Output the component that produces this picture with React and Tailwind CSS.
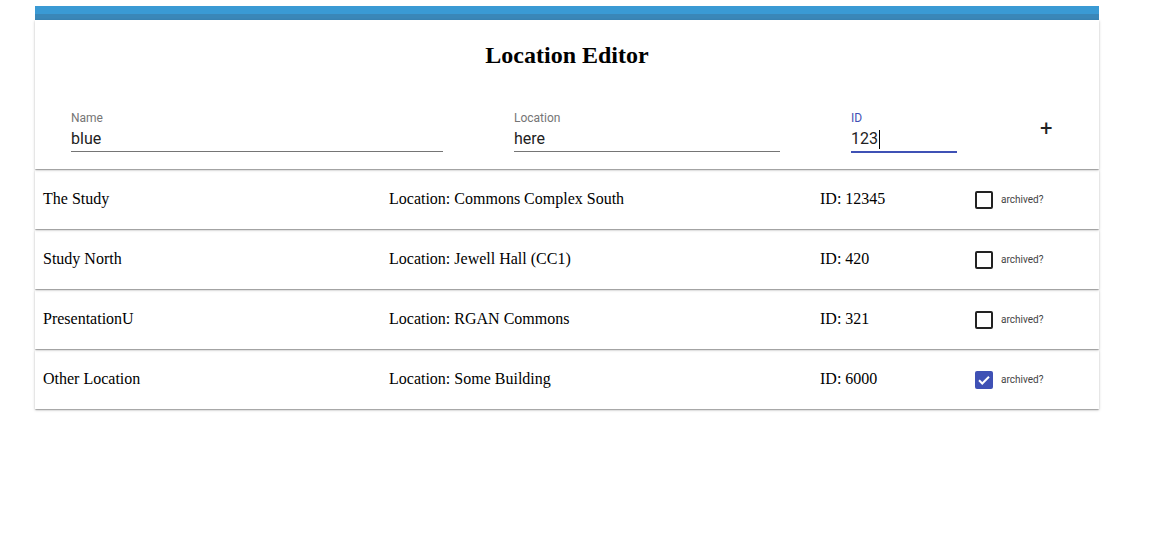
import React from "react";

const rows = [
  { name: "The Study", loc: "Commons Complex South", id: "12345", archived: false },
  { name: "Study North", loc: "Jewell Hall (CC1)", id: "420", archived: false },
  { name: "PresentationU", loc: "RGAN Commons", id: "321", archived: false },
  { name: "Other Location", loc: "Some Building", id: "6000", archived: true },
];

const shadow = "shadow-[0_1px_3px_rgba(0,0,0,0.2),0_1px_1px_rgba(0,0,0,0.14),0_2px_1px_-1px_rgba(0,0,0,0.12)]";

function Field({ label, value, width, active }) {
  return (
    <div className={`flex flex-col ${width}`} style={{ fontFamily: "Roboto, sans-serif" }}>
      <span className={`text-[12px] leading-[14px] ${active ? "text-[#3f51b5]" : "text-[#757575]"}`}>{label}</span>
      <div className="h-[24px] flex items-center text-[16px] text-[#222] mt-[2px]">
        {value}
        {active && <span className="inline-block w-[1px] h-[19px] bg-black ml-[1px]" />}
      </div>
      <div className={active ? "h-[2px] bg-[#3f51b5]" : "h-[1px] bg-[#757575]"} />
    </div>
  );
}

function Checkbox({ checked }) {
  if (checked) {
    return (
      <div className="w-[18px] h-[18px] rounded-[2px] bg-[#3f51b5] flex items-center justify-center">
        <svg width="14" height="14" viewBox="0 0 24 24">
          <path d="M3.5 12.5l5.5 5.5L20.5 6.5" fill="none" stroke="white" strokeWidth="3.4" />
        </svg>
      </div>
    );
  }
  return <div className="w-[18px] h-[18px] rounded-[2px] border-2 border-[#222]" />;
}

export default function App() {
  return (
    <div className="w-[1157px] h-[540px] bg-white pt-[6px]">
      <div className="ml-[35px] w-[1064px]">
        <div className="h-[8px] bg-[#3a9ad4]" />
        <div className="h-[6px] bg-[#3a87b8]" />
        <div className={`bg-white ${shadow} h-[149px] relative z-10`}>
          <h1
            className="text-center font-bold text-[24px] leading-[28px] pt-[21px] text-black"
            style={{ fontFamily: '"Liberation Serif", serif' }}
          >
            Location Editor
          </h1>
          <div className="flex items-start pl-[36px] mt-[42px]">
            <Field label="Name" value="blue" width="w-[372px]" />
            <div className="w-[71px]" />
            <Field label="Location" value="here" width="w-[266px]" />
            <div className="w-[71px]" />
            <Field label="ID" value="123" width="w-[106px]" active />
            <div className="ml-[83px] mt-[7px] text-[22px] leading-[22px] text-[#222]" style={{ fontFamily: "Roboto, sans-serif" }}>
              +
            </div>
          </div>
        </div>
        {rows.map((r, i) => (
          <div
            key={i}
            className={`bg-white ${shadow} h-[59px] mt-[1px] flex items-center text-[16px] text-black relative`}
            style={{ zIndex: 9 - i, fontFamily: '"Liberation Serif", serif' }}
          >
            <div className="w-[354px] pl-[8px] shrink-0 -mt-[1px]">{r.name}</div>
            <div className="w-[431px] shrink-0 -mt-[1px]">Location: {r.loc}</div>
            <div className="w-[155px] shrink-0 -mt-[1px]">ID: {r.id}</div>
            <div className="flex items-center">
              <Checkbox checked={r.archived} />
              <span className="ml-[8px] text-[10px] text-[#444]" style={{ fontFamily: "Roboto, sans-serif" }}>
                archived?
              </span>
            </div>
          </div>
        ))}
      </div>
    </div>
  );
}
